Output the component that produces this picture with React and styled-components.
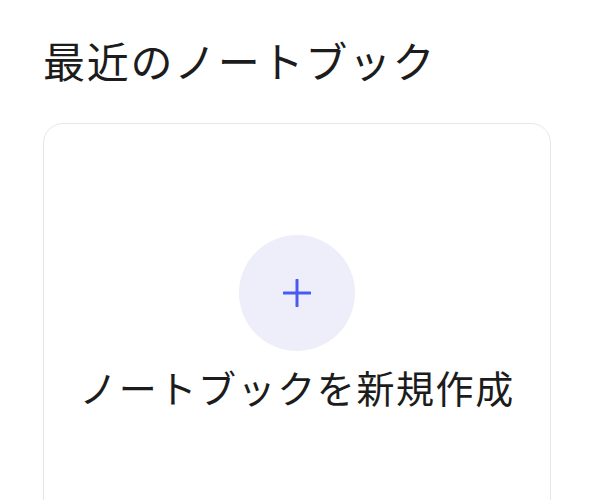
import React from "react";
import styled, { createGlobalStyle } from "styled-components";

const Global = createGlobalStyle`
  html, body { margin: 0; padding: 0; background: #ffffff; }
  body { font-family: "Noto Sans CJK JP", "Noto Sans", sans-serif; color: #1c1c1c; }
`;

const Page = styled.div`
  padding: 30px 49px 0 43px;
  height: 500px;
  box-sizing: border-box;
  overflow: hidden;
`;

const Title = styled.h2`
  margin: 0 0 33px 0;
  font-size: 42px;
  font-weight: 400;
  line-height: 60px;
  letter-spacing: 1.7px;
`;

const Card = styled.div`
  border: 1.5px solid #e6e6ee;
  border-radius: 20px;
  height: 420px;
  padding-top: 111px;
  box-sizing: border-box;
  display: flex;
  flex-direction: column;
  align-items: center;
  background: #fff;
`;

const Circle = styled.div`
  width: 116px;
  height: 116px;
  border-radius: 50%;
  background: #eeeefb;
  display: flex;
  align-items: center;
  justify-content: center;
`;

const Label = styled.div`
  margin-top: 10px;
  font-size: 38px;
  line-height: 52px;
  letter-spacing: 1.6px;
`;

export default function App() {
  return (
    <>
      <Global />
      <Page>
        <Title>最近のノートブック</Title>
        <Card>
          <Circle>
            <svg width="28" height="28" viewBox="0 0 28 28">
              <path d="M14 1v26M1 14h26" stroke="#4a5cf0" strokeWidth="3" strokeLinecap="round" />
            </svg>
          </Circle>
          <Label>ノートブックを新規作成</Label>
        </Card>
      </Page>
    </>
  );
}
